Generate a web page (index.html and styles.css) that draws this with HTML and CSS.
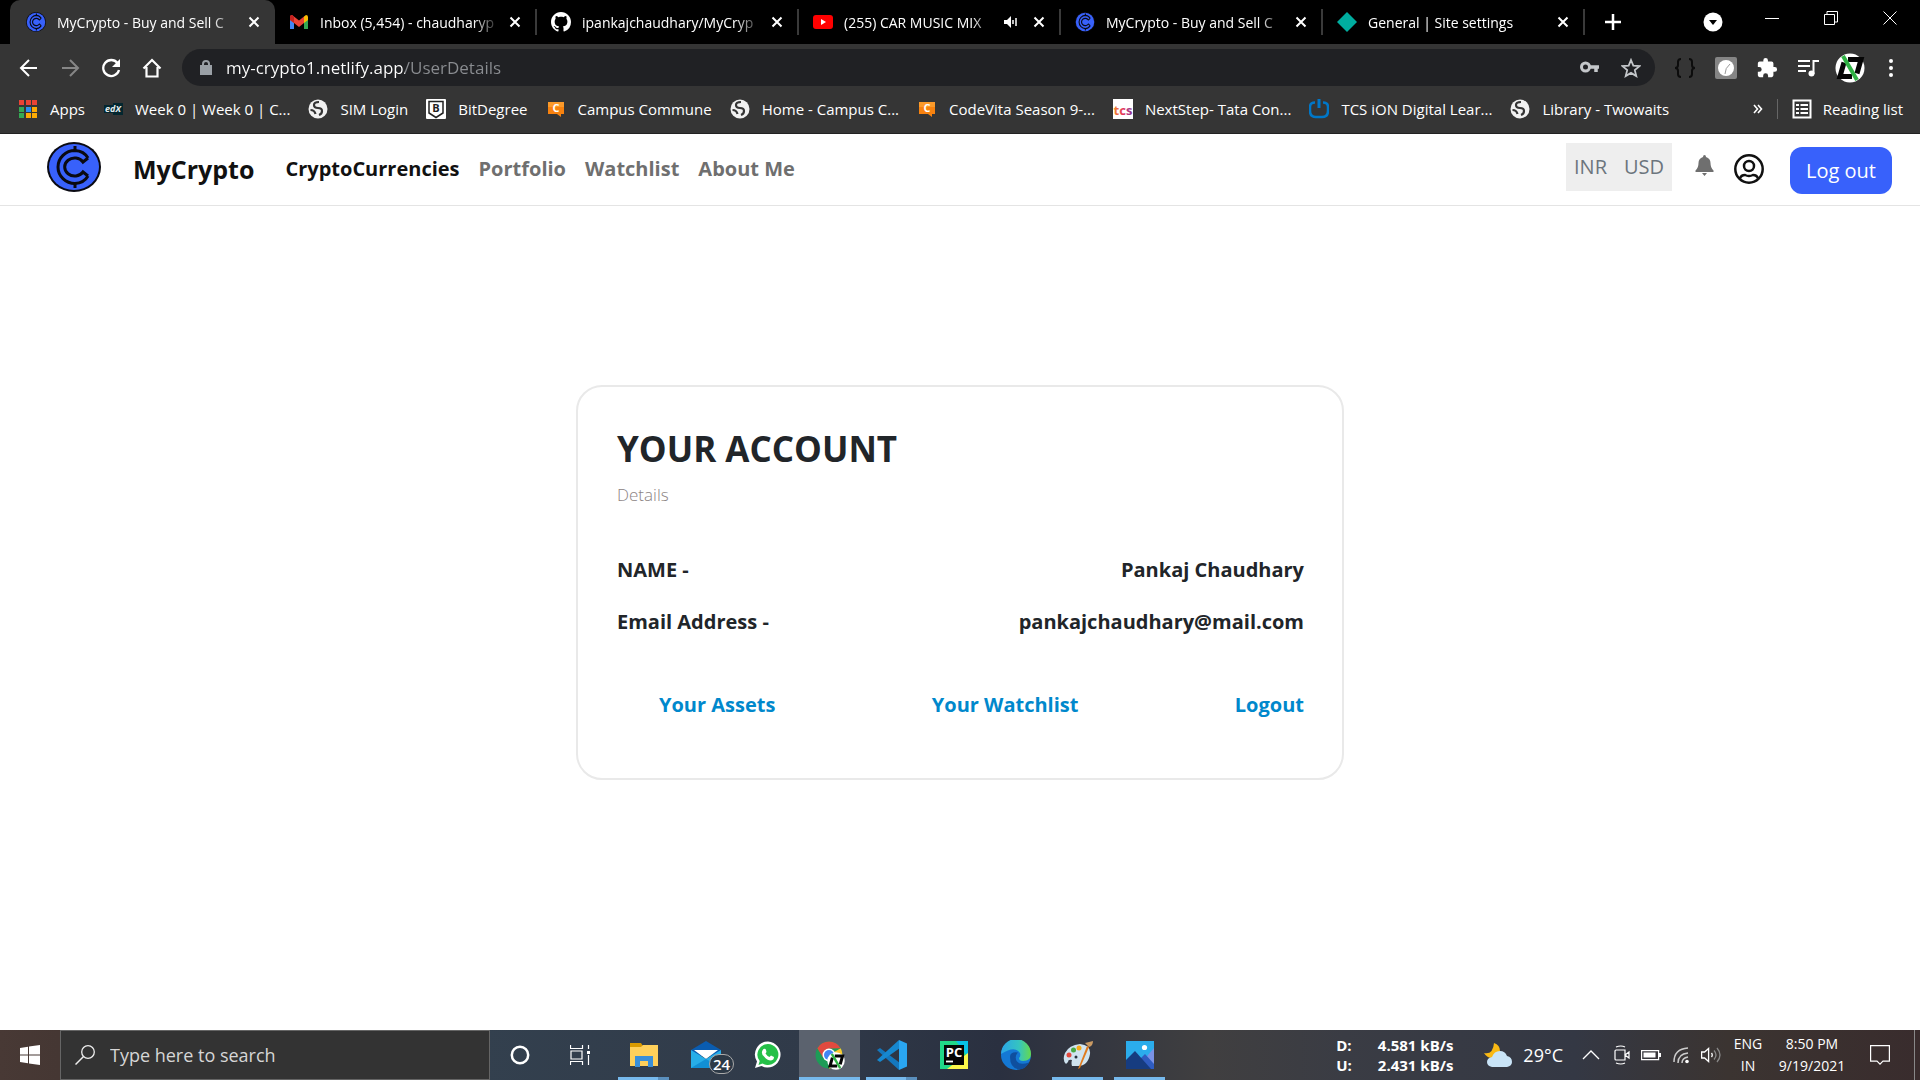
FILE: index.html
```html
<!DOCTYPE html>
<html lang="en">
<head>
<meta charset="utf-8">
<title>MyCrypto - Buy and Sell Crypto</title>
<link rel="stylesheet" href="styles.css">
</head>
<body>
<svg class="defs" aria-hidden="true">
  <symbol id="coin" viewBox="0 0 54 50" preserveAspectRatio="none">
    <ellipse cx="27" cy="25" rx="27" ry="25" fill="#0a0a12"/>
    <ellipse cx="27" cy="25" rx="25" ry="23" fill="#3861fb"/>
    <g fill="none" stroke="#0a0a12" stroke-width="3">
      <path d="M41 16l-5 4a10 9 0 1 0 0 10l5 4"/>
      <path d="M41 16q-4-7-13-7.500a17 16.500 0 0 0 0 33q9-.5 13-7.500"/>
      <path d="M28 4v5M28 41v5"/>
    </g>
  </symbol>
  <symbol id="globe" viewBox="0 0 20 20">
    <circle cx="10" cy="10" r="9.500" fill="#f1f1f1"/>
    <path d="M11 3q-5 0-5 3t4 3 4 3-3 4M2.500 11q4 0 5 4" fill="none" stroke="#353535" stroke-width="2.200"/>
  </symbol>
  <symbol id="close" viewBox="0 0 12 12"><path d="M1.500 1.500l9 9M10.500 1.500l-9 9" stroke="#fff" stroke-width="2" fill="none"/></symbol>
  <symbol id="avatar" viewBox="0 0 30 30">
    <circle cx="15" cy="15" r="14.500" fill="#fff"/>
    <path d="M13 6.500h13l-4 14M17 23.500H5l4-14" fill="none" stroke="#050505" stroke-width="5"/>
    <path d="M8 3l14 24" stroke="#2fb344" stroke-width="4"/>
  </symbol>
</svg>

<header class="browser">
  <nav class="tabs" aria-label="Tabs">
    <div class="tab tab-active"><svg class="fav"><use href="#coin"/></svg><span class="tab-title">MyCrypto - Buy and Sell C</span><button class="tab-close" aria-label="Close tab"><svg><use href="#close"/></svg></button></div>
    <div class="tab"><svg class="fav" viewBox="0 0 20 20"><path d="M1 5v12h4V8z" fill="#4285f4"/><path d="M19 5v12h-4V8z" fill="#34a853"/><path d="M15 4.500L17 3q2 0 2 2v3l-4 3z" fill="#fbbc04"/><path d="M1 8V5q0-2 2-2l7 5.500L15 4.500V11l-5 4-5-4z" fill="#ea4335"/><path d="M1 5q0-2 2-2l2 1.500V11L1 8z" fill="#c5221f"/></svg><span class="tab-title">Inbox (5,454) - chaudharyp</span><button class="tab-close" aria-label="Close tab"><svg><use href="#close"/></svg></button></div>
    <div class="tab"><svg class="fav" viewBox="0 0 16 16"><path fill="#fff" d="M8 0C3.580 0 0 3.580 0 8c0 3.540 2.290 6.530 5.470 7.590.4.070.55-.17.55-.38 0-.19-.01-.82-.01-1.490-2.010.37-2.530-.49-2.690-.94-.09-.23-.48-.94-.82-1.130-.28-.15-.68-.52-.01-.53.63-.01 1.080.58 1.230.82.72 1.210 1.870.87 2.330.66.070-.52.28-.87.51-1.070-1.780-.2-3.640-.89-3.640-3.950 0-.87.31-1.590.82-2.150-.08-.2-.36-1.020.08-2.120 0 0 .67-.21 2.200.82.64-.18 1.320-.27 2-.27s1.360.09 2 .27c1.530-1.040 2.200-.82 2.200-.82.44 1.100.16 1.920.08 2.120.51.56.82 1.270.82 2.150 0 3.070-1.870 3.750-3.650 3.950.29.25.54.73.54 1.480 0 1.070-.01 1.930-.01 2.200 0 .21.15.46.55.38A8 8 0 0 0 16 8c0-4.420-3.580-8-8-8z"/></svg><span class="tab-title">ipankajchaudhary/MyCryp</span><button class="tab-close" aria-label="Close tab"><svg><use href="#close"/></svg></button></div>
    <div class="tab"><svg class="fav" viewBox="0 0 20 20"><rect y="3" width="20" height="14" rx="3" fill="#f00"/><path d="M8 7l5 3-5 3z" fill="#fff"/></svg><span class="tab-title">(255) CAR MUSIC MIX</span><button class="tab-mute" aria-label="Mute tab"><svg viewBox="0 0 14 12"><path d="M0 4h3l4-4v12L3 8H0z" fill="#fff"/><path d="M9 4v4M12 2v8" stroke="#fff" stroke-width="1.500"/></svg></button><button class="tab-close" aria-label="Close tab"><svg><use href="#close"/></svg></button></div>
    <div class="tab"><svg class="fav"><use href="#coin"/></svg><span class="tab-title">MyCrypto - Buy and Sell C</span><button class="tab-close" aria-label="Close tab"><svg><use href="#close"/></svg></button></div>
    <div class="tab"><svg class="fav" viewBox="0 0 20 20"><path d="M10 0l10 10-10 10L0 10z" fill="#00ad9f"/></svg><span class="tab-title">General | Site settings</span><button class="tab-close" aria-label="Close tab"><svg><use href="#close"/></svg></button></div>
    <button class="new-tab" aria-label="New tab"><svg viewBox="0 0 16 16"><path d="M8 0v16M0 8h16" stroke="#fff" stroke-width="2.500"/></svg></button>
    <div class="window-controls">
      <button class="tab-search" aria-label="Search tabs"><svg viewBox="0 0 20 20"><circle cx="10" cy="10" r="9.500" fill="#fff"/><path d="M6 8h8l-4 5z" fill="#000"/></svg></button>
      <button aria-label="Minimize"><svg viewBox="0 0 14 14"><path d="M0 7.500h14" stroke="#fff"/></svg></button>
      <button aria-label="Restore"><svg viewBox="0 0 14 14"><path d="M.5 3.500h10v10H.5zM3 3V.5h10.500V11H11" fill="none" stroke="#fff"/></svg></button>
      <button aria-label="Close window"><svg viewBox="0 0 14 14"><path d="M.5.5l13 13M13.500.5l-13 13" stroke="#fff"/></svg></button>
    </div>
  </nav>

  <div class="toolbar">
    <button aria-label="Back"><svg viewBox="0 0 20 20"><path d="M18 10H3M10 2l-8 8 8 8" fill="none" stroke="#fff" stroke-width="2"/></svg></button>
    <button aria-label="Forward"><svg viewBox="0 0 20 20"><path d="M2 10h15M10 2l8 8-8 8" fill="none" stroke="#868686" stroke-width="2"/></svg></button>
    <button aria-label="Reload"><svg viewBox="0 0 20 20"><path d="M16.500 5A8 8 0 1 0 18 12" fill="none" stroke="#fff" stroke-width="2.300"/><path d="M19 1v8h-8z" fill="#fff"/></svg></button>
    <button aria-label="Home"><svg viewBox="0 0 20 20"><path d="M4.500 9v9.500h11V9M1.500 10.500L10 2l8.500 8.500" fill="none" stroke="#fff" stroke-width="2.200"/></svg></button>
    <div class="omnibox">
      <svg class="lock" viewBox="0 0 12 16"><path d="M0 5h12v10H0z" fill="#9aa0a6"/><path d="M3 6V4a3 3 0 0 1 6 0v2" fill="none" stroke="#9aa0a6" stroke-width="2"/></svg>
      <input class="address" type="text" aria-label="Address" value="my-crypto1.netlify.app/UserDetails">
      <button aria-label="Saved password"><svg viewBox="0 0 20 20"><circle cx="5.500" cy="9" r="4" fill="none" stroke="#c4c7ca" stroke-width="3"/><path d="M9 9h10M16 9v5" stroke="#c4c7ca" stroke-width="3.500"/></svg></button>
      <button aria-label="Bookmark this page"><svg viewBox="0 0 20 20"><path d="M10 2l2.300 5.600 6.200.5-4.700 4 1.500 6L10 14.900l-5.300 3.200 1.500-6-4.700-4 6.200-.5z" fill="none" stroke="#c4c7ca" stroke-width="1.800"/></svg></button>
    </div>
    <div class="extensions">
      <button aria-label="JSON viewer"><svg viewBox="0 0 22 22"><path d="M7 2Q4 2 4 5v3q0 3-3 3 3 0 3 3v3q0 3 3 3M15 2q3 0 3 3v3q0 3 3 3-3 0-3 3v3q0 3-3 3" fill="none" stroke="#0c0c0c" stroke-width="2"/></svg></button>
      <button aria-label="Clock extension"><svg viewBox="0 0 22 22"><rect width="22" height="22" rx="2" fill="#858585"/><circle cx="11" cy="11" r="8" fill="#fff"/><path d="M10 17q0-6 5-10" fill="none" stroke="#999"/></svg></button>
      <button aria-label="Extensions"><svg viewBox="0 0 24 24"><path d="M20.500 11H19V7a2 2 0 0 0-2-2h-4V3.500a2.500 2.500 0 0 0-5 0V5H4a2 2 0 0 0-2 2v3.800h1.500a2.700 2.700 0 0 1 0 5.400H2V20a2 2 0 0 0 2 2h3.800v-1.500a2.700 2.700 0 0 1 5.400 0V22H17a2 2 0 0 0 2-2v-4h1.500a2.500 2.500 0 0 0 0-5z" fill="#fff"/></svg></button>
      <button aria-label="Media"><svg viewBox="0 0 22 22"><path d="M1 4h12M1 9h12M1 14h8M16.500 17V4H22" fill="none" stroke="#fff" stroke-width="2"/><circle cx="14.500" cy="16.500" r="3" fill="#fff"/></svg></button>
      <button class="profile" aria-label="Profile"><svg><use href="#avatar"/></svg></button>
      <button class="menu" aria-label="Menu"><svg viewBox="0 0 6 20"><circle cx="3" cy="3" r="2" fill="#fff"/><circle cx="3" cy="10" r="2" fill="#fff"/><circle cx="3" cy="17" r="2" fill="#fff"/></svg></button>
    </div>
  </div>

  <nav class="bookmarks" aria-label="Bookmarks">
    <a href="#"><svg viewBox="0 0 20 20"><path d="M1 1h5v5H1zM8 1h5v5H8zM14 1h5v5h-5z" fill="#ea4335"/><path d="M1 8h5v5H1z" fill="#34a853"/><path d="M8 8h5v5H8z" fill="#2b8df0"/><path d="M14 8h5v5h-5z" fill="#fbaa04"/><path d="M1 14h5v5H1z" fill="#34a853"/><path d="M8 14h5v5H8zM14 14h5v5h-5z" fill="#fbaa04"/></svg><span>Apps</span></a>
    <a href="#"><svg viewBox="0 0 20 20"><path d="M1 6h9V4h10v12H10v-2H1z" fill="#03262f"/><text x="10" y="13" class="glyph slanted" font-size="9" fill="#e6eeef">edX</text></svg><span>Week 0 | Week 0 | C...</span></a>
    <a href="#"><svg><use href="#globe"/></svg><span>SIM Login</span></a>
    <a href="#"><svg viewBox="0 0 20 20"><rect width="20" height="20" rx="1" fill="#fff"/><path d="M3 2.500h14V14l-7 4.500L3 14z" fill="none" stroke="#222" stroke-width="1.500"/><text x="10" y="13" class="glyph" font-size="11" fill="#222">B</text></svg><span>BitDegree</span></a>
    <a href="#"><svg viewBox="0 0 20 20"><path d="M2 3h16v12h-3v3l-4-3H2z" fill="#f7820f"/><path d="M2 3h16v5H2z" fill="#fb9a2a"/><text x="10" y="13" class="glyph" font-size="11" fill="#fff">C</text></svg><span>Campus Commune</span></a>
    <a href="#"><svg><use href="#globe"/></svg><span>Home - Campus C...</span></a>
    <a href="#"><svg viewBox="0 0 20 20"><path d="M2 3h16v12h-3v3l-4-3H2z" fill="#f7820f"/><path d="M2 3h16v5H2z" fill="#fb9a2a"/><text x="10" y="13" class="glyph" font-size="11" fill="#fff">C</text></svg><span>CodeVita Season 9-...</span></a>
    <a href="#"><svg viewBox="0 0 20 20"><defs><linearGradient id="tata"><stop offset="0" stop-color="#f28a2e"/><stop offset=".5" stop-color="#e4335c"/><stop offset="1" stop-color="#8a3a9a"/></linearGradient></defs><rect width="20" height="20" fill="#fff"/><text x="10" y="16" class="glyph" font-size="13" fill="url(#tata)">tcs</text></svg><span>NextStep- Tata Con...</span></a>
    <a href="#"><svg viewBox="0 0 20 20"><path d="M6 3.500Q1 3.500 1 8v4q0 6 6 6h6q6 0 6-6V8q0-4.500-5-4.500" fill="none" stroke="#0077c8" stroke-width="2.500"/><path d="M10 0v9" stroke="#0077c8" stroke-width="3"/></svg><span>TCS iON Digital Lear...</span></a>
    <a href="#"><svg><use href="#globe"/></svg><span>Library - Twowaits</span></a>
    <button class="overflow" aria-label="More bookmarks"><svg viewBox="0 0 10 10"><path d="M1 1l3.500 4L1 9M5 1l3.500 4L5 9" fill="none" stroke="#fff" stroke-width="1.600"/></svg></button>
    <a href="#" class="reading"><svg viewBox="0 0 20 20"><path d="M1.500 1.500h17v17h-17z" fill="none" stroke="#fff" stroke-width="2"/><path d="M4 6h3M4 10h3M4 14h3M8.500 6H16M8.500 10H16M8.500 14H16" stroke="#fff" stroke-width="2"/></svg><span>Reading list</span></a>
  </nav>
</header>

<nav class="navbar" aria-label="Site">
  <svg class="logo"><use href="#coin"/></svg>
  <a href="#" class="brand">MyCrypto</a>
  <div class="nav-links">
    <a href="#" class="current">CryptoCurrencies</a>
    <a href="#">Portfolio</a>
    <a href="#">Watchlist</a>
    <a href="#">About Me</a>
  </div>
  <div class="currency"><button>INR</button><button>USD</button></div>
  <button class="bell" aria-label="Notifications"><svg viewBox="0 0 18 21"><path d="M9 0q1.500 0 1.500 2Q15 3.500 15 8q0 5 3 7.500V17H0v-1.500Q3 13 3 8q0-4.500 4.500-6Q7.500 0 9 0zM6.500 18h5L9 21z" fill="#6f6f6f"/></svg></button>
  <button class="user" aria-label="Account"><svg viewBox="0 0 30 30"><g fill="none" stroke="#111" stroke-width="2.500"><circle cx="15" cy="15" r="13.700"/><circle cx="15" cy="12" r="5"/><path d="M6 24.500q1-3.500 5-3.500 2 1 4 1t4-1q4 0 5 3.500"/></g></svg></button>
  <button class="logout">Log out</button>
</nav>

<main class="page">
  <section class="card">
    <h1>YOUR ACCOUNT</h1>
    <p class="sub">Details</p>
    <dl class="details">
      <div><dt>NAME -</dt><dd>Pankaj Chaudhary</dd></div>
      <div><dt>Email Address -</dt><dd>pankajchaudhary@mail.com</dd></div>
    </dl>
    <div class="card-links">
      <a href="#">Your Assets</a>
      <a href="#">Your Watchlist</a>
      <a href="#">Logout</a>
    </div>
  </section>
</main>

<footer class="taskbar">
  <button class="start" aria-label="Start"><svg viewBox="0 0 20 20"><path d="M0 3l8-1.200V9.500H0zM9 1.600L20 0v9.500H9zM0 10.500h8v7.800L0 17zM9 10.500h11V20L9 18.400z" fill="#fff"/></svg></button>
  <label class="search">
    <svg viewBox="0 0 20 20"><circle cx="13" cy="7" r="6.300" fill="none" stroke="#eee" stroke-width="1.300"/><path d="M8.500 11.500L.5 19.500" stroke="#eee" stroke-width="1.500"/></svg>
    <input type="text" placeholder="Type here to search" aria-label="Type here to search">
  </label>
  <button class="system" aria-label="Cortana"><svg viewBox="0 0 20 20"><circle cx="10" cy="10" r="8.200" fill="none" stroke="#fff" stroke-width="2.500"/></svg></button>
  <button class="system" aria-label="Task view"><svg viewBox="0 0 20 20"><path d="M.5 0v3.500h12V0M.5 20v-3.500h12V20M1 6h11v8H1zM18.500 0v4M18.500 10v10" fill="none" stroke="#fff" stroke-width="1.200"/><path d="M17 6h3v3h-3z" fill="#fff"/></svg></button>
  <div class="apps">
    <button class="app open multi" aria-label="File Explorer"><svg viewBox="0 0 30 30"><path d="M1 3h11l2 3h14v6H1z" fill="#d99a00"/><path d="M1 7h11l2-2h15v21H1z" fill="#ffd05a"/><path d="M6 26V16h18v11h-5v-6h-8v6H6z" fill="#3a8fd8"/></svg></button>
    <button class="app" aria-label="Mail"><svg viewBox="0 0 30 30"><path d="M0 10L15 1l15 9v6H0z" fill="#0a5cb0"/><path d="M3 10h24L15 19z" fill="#fff"/><path d="M0 10l15 9 15-9v18H0z" fill="#27aee8"/><path d="M0 28l15-9 15 9z" fill="#118fd4"/></svg><span class="badge">24</span></button>
    <button class="app" aria-label="WhatsApp"><svg viewBox="0 0 30 30"><path d="M15 1.500A13 13 0 1 1 8.500 26L2 28l2-6.500A13 13 0 0 1 15 1.500z" fill="#fff"/><path d="M15 4A10.500 10.500 0 1 1 9.500 23.500L5.500 25l1.200-4A10.500 10.500 0 0 1 15 4z" fill="#25c048"/><path d="M10.500 9q2-1 2.500 1l.5 2-1 1.500q1.500 2.500 4 3.500l1.500-1.500 3 1.500q0 3-3 3.500-4 0-7-4-4-4-.5-7.500z" fill="#fff"/></svg></button>
    <button class="app open selected" aria-label="Chrome"><svg viewBox="0 0 30 30"><circle cx="14" cy="15" r="13.500" fill="#1d9c57"/><path d="M14 15l11.700-6.700A13.500 13.500 0 0 1 14 28.500z" fill="#fbc932"/><path d="M2.300 8.300a13.500 13.500 0 0 1 23.400 0L14 8.500l-6 9z" fill="#e04a3f"/><circle cx="14" cy="15" r="6.500" fill="#fff"/><circle cx="14" cy="15" r="5" fill="#4285f4"/><svg x="12" y="12" width="18" height="18"><use href="#avatar"/></svg></svg></button>
    <button class="app open multi" aria-label="Visual Studio Code"><svg viewBox="0 0 30 30"><path d="M0 10l3-2 20 15-1 7z" fill="#1477bd"/><path d="M0 20l3 2L23 8l-1-8z" fill="#1688d0"/><path d="M22 0l8 3.500v23L22 30z" fill="#2aa6f2"/></svg></button>
    <button class="app" aria-label="PyCharm"><svg viewBox="0 0 30 30"><path d="M1 1h28v28H1z" fill="#21d789"/><path d="M17 1h12v16z" fill="#07c3e8"/><path d="M29 13v16H8z" fill="#fcf84a"/><path d="M5 5h20v20H5z" fill="#050505"/><text x="15" y="17" class="glyph" font-size="13" fill="#fff">PC</text><path d="M7 21.500h7" stroke="#fff" stroke-width="1.800"/></svg></button>
    <button class="app" aria-label="Edge"><svg viewBox="0 0 30 30"><defs><linearGradient id="wave"><stop offset="0" stop-color="#2aa5e8"/><stop offset=".6" stop-color="#35c4c0"/><stop offset="1" stop-color="#66d94c"/></linearGradient></defs><circle cx="15" cy="15" r="15" fill="#1478d4"/><path d="M0 14A15 15 0 0 1 30 14q0 7-8 7-4 0-4-3 2-2 1-5Q14 5 0 14z" fill="url(#wave)"/><path d="M9 17q0 11 9 12.500 7-.5 10-7-9 3-12-1-3-5 1-9-8-1-8 4.500z" fill="#0f4f9e"/></svg></button>
    <button class="app open" aria-label="Paint"><svg viewBox="0 0 30 30"><path d="M17 4q11 1 10 10-2 12-12 12H9q-1-3 0-6-4-1-4 2l-2 2Q-1 20 2 13 6 5 17 4z" fill="#cfe3ef"/><circle cx="6" cy="15" r="2.500" fill="#e2493d"/><circle cx="10.500" cy="10" r="2.500" fill="#48a942"/><circle cx="16" cy="8" r="2.500" fill="#f4a91b"/><circle cx="13" cy="17" r="1.500" fill="#26313d"/><path d="M24 6l2 1-9 21-2 1z" fill="#e07b1e"/><path d="M22 3l8-2q0 5-4 6z" fill="#c99a63"/></svg></button>
    <button class="app open" aria-label="Photos"><svg viewBox="0 0 30 30"><path d="M1 1h28v28H1z" fill="#2badec"/><path d="M29 8v21H15l8-14z" fill="#7a92e6"/><path d="M12 22l8-8 9 10v5H12z" fill="#2f5cc0"/><path d="M1 20l9-9L26 29H1z" fill="#163c80"/><circle cx="19.500" cy="7.500" r="2.600" fill="#fff"/></svg></button>
  </div>
  <div class="net"><span>D:</span><span>4.581 kB/s</span><span>U:</span><span>2.431 kB/s</span></div>
  <div class="weather"><svg viewBox="0 0 28 26"><path d="M10 1q6 2 6 8-2 7-8 7-5 0-8-5 9 2 10-10z" fill="#f9b914"/><path d="M8 25q-5-1-5-5t5-5q2-6 8-6 5 0 7 5 5 1 5 6 0 4-5 5z" fill="#c9e4f7"/></svg><span>29°C</span></div>
  <div class="tray">
    <svg viewBox="0 0 20 20"><path d="M2 14l8-8 8 8" fill="none" stroke="#fff" stroke-width="1.300"/></svg>
    <svg viewBox="0 0 20 20"><path d="M5 5h9v10H5q-1 0-1-1V6q0-1 1-1zM14 10l4-3v6zM5 2q5-2 9 0M5 18q5 2 9 0" fill="none" stroke="#fff" stroke-width="1.200"/></svg>
    <svg viewBox="0 0 20 20"><path d="M.6 5.600h17v9H.6z" fill="none" stroke="#fff" stroke-width="1.200"/><path d="M2.500 7.500h12v5h-12zM18 8h2v4h-2z" fill="#fff"/></svg>
    <svg viewBox="0 0 20 20"><path d="M3 17Q3 4 17 3M7 18q0-9 10-10M11 18q0-5 6-6" fill="none" stroke="#ccc" stroke-width="1.500"/><circle cx="16" cy="16.500" r="1.800" fill="#fff"/></svg>
    <svg viewBox="0 0 20 20"><path d="M.6 7h3l4-3.500v13L3.600 13h-3zM10.500 8q1.500 2 0 4" fill="none" stroke="#fff" stroke-width="1.300"/><path d="M13 5.500q4 4.500 0 9M16 3q6 7 0 14" fill="none" stroke="#888" stroke-width="1.300"/></svg>
  </div>
  <div class="lang"><span>ENG</span><span>IN</span></div>
  <div class="clock"><span>8:50 PM</span><span>9/19/2021</span></div>
  <button class="action" aria-label="Notifications"><svg viewBox="0 0 20 20"><path d="M.6.600h18.800v15.500H13l-3 3-3-3H.6z" fill="none" stroke="#fff" stroke-width="1.200"/></svg></button>
</footer>
</body>
</html>
```
FILE: styles.css
```css
* { box-sizing: border-box; }
body {
  margin: 0;
  min-height: 100vh;
  display: flex;
  flex-direction: column;
  background: #fff;
  color: #212529;
  font-family: "Open Sans", "Noto Sans", sans-serif;
}
button {
  display: flex;
  align-items: center;
  justify-content: center;
  flex: none;
  margin: 0;
  padding: 0;
  border: 0;
  background: none;
  font: inherit;
}
a { color: inherit; text-decoration: none; white-space: nowrap; }
svg { display: block; flex: none; }
.defs { position: absolute; width: 0; height: 0; }
.glyph { font-family: "Open Sans", sans-serif; font-weight: 700; text-anchor: middle; }
.slanted { font-style: italic; }

/* Browser chrome */
.browser { background: #353535; color: #fff; border-bottom: 1px solid #222; }
.tabs { display: flex; height: 44px; padding: 0 1px 0 10px; background: #000; }
.tab {
  display: flex;
  align-items: center;
  flex: 0 1 262px;
  min-width: 0;
  height: 26px;
  margin-top: 9px;
  padding: 0 13px 0 14px;
  border-right: 2px solid #3a3a3a;
  font-size: 14px;
}
.tab-active {
  flex-basis: 265px;
  height: 44px;
  margin-top: 0;
  padding: 0 14px 0 16px;
  border: 0;
  border-radius: 10px 10px 0 0;
  background: #353535;
}
.fav { width: 20px; height: 20px; margin-right: 11px; }
.tab-title {
  flex: 1;
  min-width: 0;
  overflow: hidden;
  white-space: nowrap;
  -webkit-mask-image: linear-gradient(90deg, #000 85%, transparent);
  mask-image: linear-gradient(90deg, #000 85%, transparent);
}
.tab-close { width: 14px; margin-left: 8px; }
.tab-close svg { width: 12px; height: 12px; }
.tab-mute { width: 14px; margin: 0 6px 0 9px; }
.tab-mute svg { width: 14px; height: 12px; }
.new-tab { width: 56px; }
.new-tab svg { width: 16px; height: 16px; }
.window-controls { display: flex; margin-left: auto; height: 36px; }
.window-controls button { width: 59px; }
.window-controls svg { width: 14px; height: 14px; }
.window-controls .tab-search { height: 44px; }
.window-controls .tab-search svg { width: 20px; height: 20px; }

.toolbar { display: flex; align-items: center; height: 47px; padding: 0 10px 0 8px; }
.toolbar button { width: 41px; }
.toolbar svg { width: 20px; height: 20px; }
.omnibox {
  display: flex;
  align-items: center;
  flex: 1;
  height: 37px;
  margin: 0 9px 0 10px;
  padding: 0 4px 0 18px;
  border-radius: 19px;
  background: #202124;
}
.toolbar .lock { width: 12px; height: 16px; }
.address {
  flex: 1;
  min-width: 0;
  margin: 0 0 0 14px;
  padding: 0;
  border: 0;
  outline: 0;
  background: linear-gradient(90deg, #fff 179px, #8a8d91 179px);
  -webkit-background-clip: text;
  background-clip: text;
  color: transparent;
  font: 17px/24px "Open Sans", "Noto Sans", sans-serif;
}
.extensions { display: flex; align-items: center; }
.extensions svg { width: 22px; height: 22px; }
.extensions .profile svg { width: 30px; height: 30px; }
.toolbar .profile { width: 44px; }
.toolbar .menu { width: 38px; }
.toolbar .menu svg { width: 6px; height: 20px; }

.bookmarks {
  display: flex;
  align-items: center;
  gap: 18px;
  height: 42px;
  padding: 0 17px 6px 18px;
  font-size: 15px;
}
.bookmarks a { display: flex; align-items: center; gap: 12px; }
.bookmarks a svg { width: 20px; height: 20px; }
.overflow { margin-left: auto; }
.overflow svg { width: 10px; height: 10px; }
.bookmarks .reading { border-left: 1px solid #666; padding-left: 14px; margin-left: -4px; gap: 11px; }

/* Site navigation */
.navbar {
  display: flex;
  align-items: center;
  height: 72px;
  padding: 0 28px 2px 47px;
  border-bottom: 1px solid #e4e4e4;
  font-size: 20px;
}
.logo { width: 54px; height: 50px; margin-bottom: 4px; }
.brand { margin-left: 32px; color: #111; font-size: 25px; font-weight: 700; }
.nav-links { display: flex; gap: 19px; margin-left: 31px; color: #6f6f6f; font-weight: 700; }
.nav-links .current { color: #111; }
.currency {
  display: flex;
  justify-content: space-between;
  width: 106px;
  height: 48px;
  margin: 0 23px 4px auto;
  padding: 0 8px;
  background: #eee;
}
.currency button { color: #6c757d; }
.bell { margin: 0 20px 6px 0; }
.bell svg { width: 19px; height: 21px; }
.user svg { width: 30px; height: 30px; }
.user { margin: 0 26px 0 0; }
.logout { width: 102px; height: 47px; margin-top: 4px; border-radius: 12px; background: #3861fb; color: #fff; }

/* Account card */
.page { flex: 1; display: flex; align-items: flex-start; justify-content: center; padding: 179px 0 40px; }
.card {
  width: 40%;
  min-width: 560px;
  padding: 38px 38px 59px 39px;
  border: 2px solid #e9e9e9;
  border-radius: 26px;
}
.card h1 { margin: 0; font-size: 35px; line-height: 48px; font-weight: 700; }
.sub { margin: 10px 0 0; color: #8b8383; font-size: 17px; line-height: 24px; font-weight: 300; }
.details { margin: 49px 0 0; font-size: 20px; font-weight: 700; }
.details div { display: flex; justify-content: space-between; height: 52px; line-height: 28px; }
.details dd { margin: 0; }
.card-links {
  display: flex;
  justify-content: space-between;
  margin-top: 31px;
  padding-left: 42px;
  color: #0088cc;
  font-size: 20px;
  line-height: 28px;
  font-weight: 700;
}

/* Taskbar */
.taskbar {
  display: flex;
  align-items: center;
  height: 50px;
  background: linear-gradient(90deg, #483935 0, #453733 3%, #33404e 25%, #303a49 42%, #2a3040 52%, #403f40 63%, #3a3c44 70%, #343844 82%, #3b3431 90%, #392c2d 100%);
  color: #fff;
}
.taskbar button { color: #fff; }
.start { width: 60px; height: 50px; }
.start svg, .system svg { width: 20px; height: 20px; }
.system { width: 60px; height: 50px; }
.search {
  display: flex;
  align-items: center;
  width: 430px;
  height: 50px;
  padding-left: 14px;
  border: 1px solid #656565;
  background: #333;
}
.search svg { width: 20px; height: 20px; }
.search input {
  flex: 1;
  min-width: 0;
  margin-left: 15px;
  padding: 0;
  border: 0;
  outline: 0;
  background: none;
  font: 18px/24px "Open Sans", "Noto Sans", sans-serif;
}
.search input::placeholder { color: #d6d6d6; }
.apps { display: flex; gap: 1px; margin-left: 3px; }
.app { position: relative; width: 61px; height: 50px; }
.app svg { width: 30px; height: 30px; }
.app svg svg { width: 18px; height: 18px; }
.app.open::after {
  content: "";
  position: absolute;
  inset: auto 5px 0;
  height: 3px;
  background: #76b9ed;
}
.app.multi::after { background: linear-gradient(90deg, #76b9ed 40px, #5a8fbd 40px); }
.app.selected { background: #5b626e; }
.app.selected::after { inset: auto 0 0; }
.badge {
  position: absolute;
  left: 34px;
  top: 24px;
  padding: 0 3px;
  border: 1px solid #aaa;
  border-radius: 10px;
  background: #2d3946;
  font-size: 15px;
  line-height: 18px;
  font-weight: 600;
}
.net {
  display: grid;
  grid-template-columns: auto auto;
  column-gap: 26px;
  margin-left: auto;
  font-size: 15px;
  line-height: 20px;
  font-weight: 700;
}
.weather { display: flex; align-items: center; gap: 11px; margin-left: 31px; font-size: 18px; }
.weather svg { width: 28px; height: 26px; }
.tray { display: flex; gap: 10px; margin-left: 18px; }
.tray svg { width: 20px; height: 20px; }
.lang, .clock { display: flex; flex-direction: column; align-items: center; font-size: 14px; line-height: 22px; }
.lang { width: 34px; margin-left: 10px; }
.clock { width: 72px; margin-left: 11px; }
.action { justify-content: flex-start; width: 67px; height: 50px; padding-left: 22px; border-right: 1px solid #888; margin-right: 5px; }
.action svg { width: 20px; height: 20px; }
```
